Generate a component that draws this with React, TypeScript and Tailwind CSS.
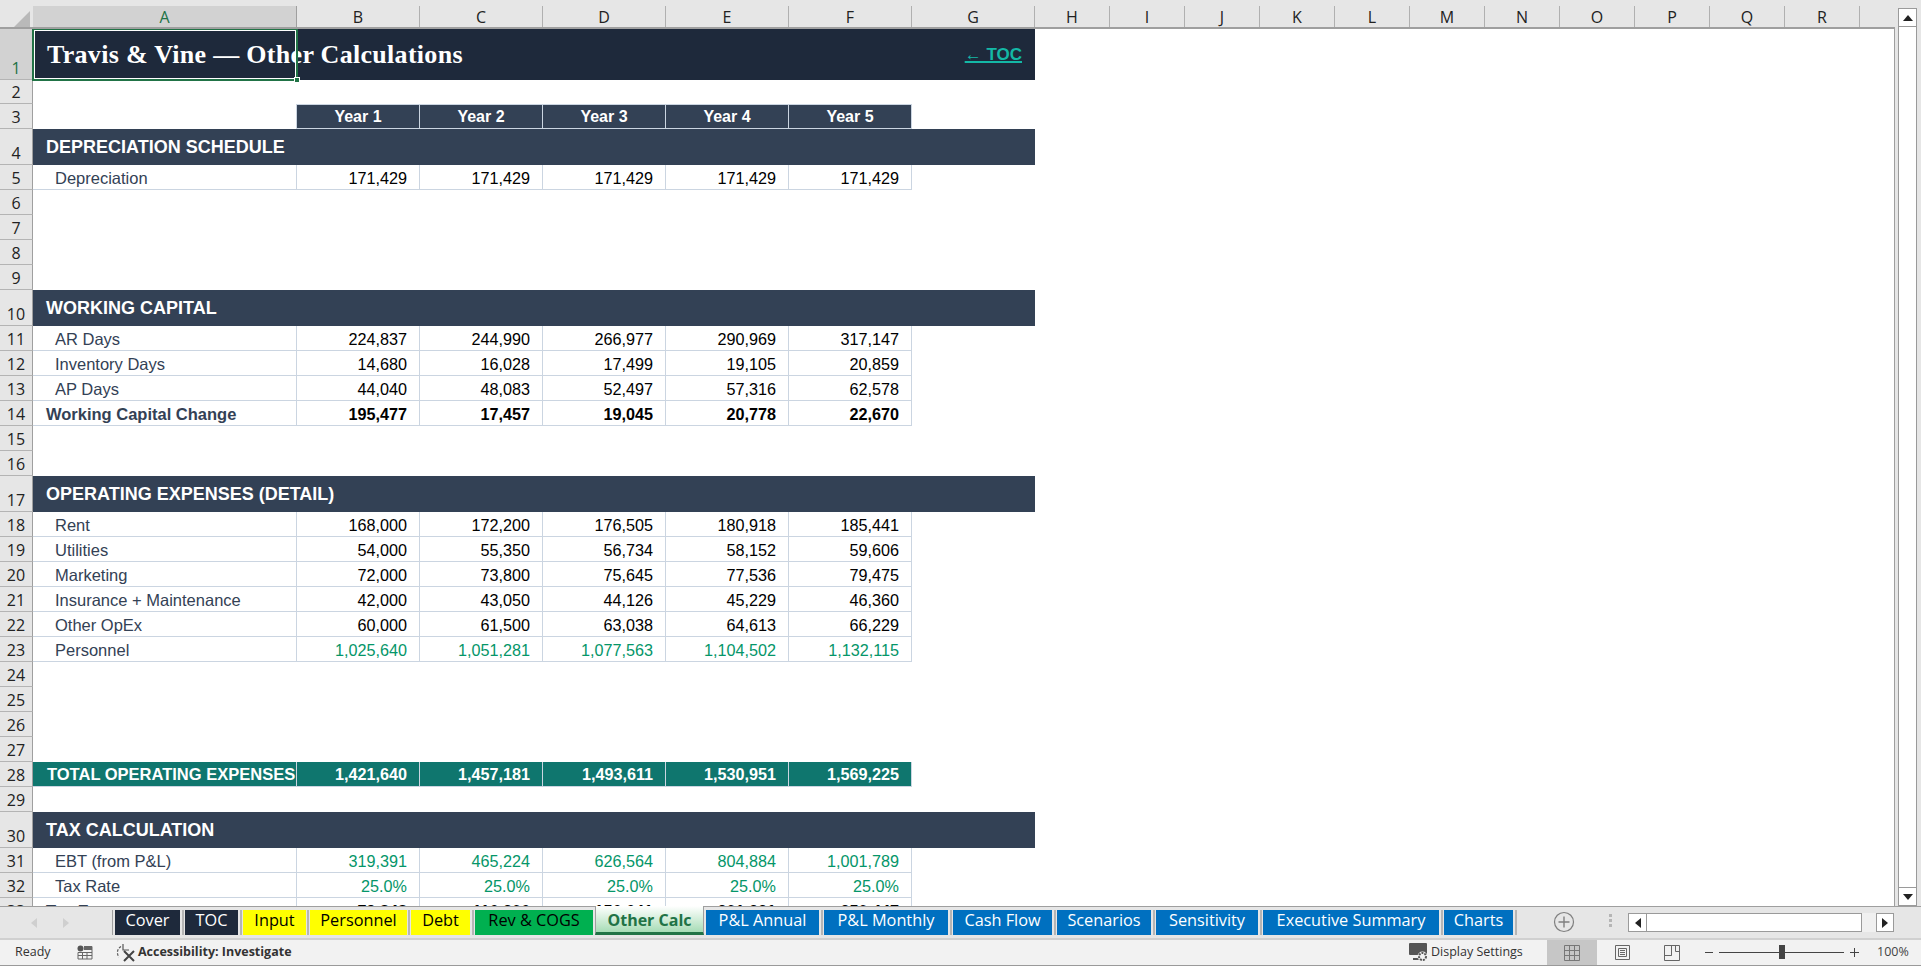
import { ReactNode } from "react";

const colHeads = [
  { l: "B", w: "w-[123px]" }, { l: "C", w: "w-[123px]" }, { l: "D", w: "w-[123px]" }, { l: "E", w: "w-[123px]" },
  { l: "F", w: "w-[123px]" }, { l: "G", w: "w-[123px]" }, { l: "H", w: "w-[75px]" }, { l: "I", w: "w-[75px]" },
  { l: "J", w: "w-[75px]" }, { l: "K", w: "w-[75px]" }, { l: "L", w: "w-[75px]" }, { l: "M", w: "w-[75px]" },
  { l: "N", w: "w-[75px]" }, { l: "O", w: "w-[75px]" }, { l: "P", w: "w-[75px]" }, { l: "Q", w: "w-[75px]" },
  { l: "R", w: "w-[75px]" },
];

const tabs = [
  { name: "Cover", cls: "w-[65px] bg-[#1e293b] text-white", gap: "w-[5px]" },
  { name: "TOC", cls: "w-[53px] bg-[#1e293b] text-white", gap: "w-[5px]" },
  { name: "Input", cls: "w-[63px] bg-[#ffff00] text-black", gap: "w-[4px]" },
  { name: "Personnel", cls: "w-[97px] bg-[#ffff00] text-black", gap: "w-[4px]" },
  { name: "Debt", cls: "w-[59px] bg-[#ffff00] text-black", gap: "w-[5px]" },
  { name: "Rev & COGS", cls: "w-[118px] bg-[#00b050] text-black", gap: "" },
  { name: "P&L Annual", cls: "w-[113px] bg-[#0070c0] text-white", gap: "w-[5px]" },
  { name: "P&L Monthly", cls: "w-[124px] bg-[#0070c0] text-white", gap: "w-[5px]" },
  { name: "Cash Flow", cls: "w-[99px] bg-[#0070c0] text-white", gap: "w-[5px]" },
  { name: "Scenarios", cls: "w-[94px] bg-[#0070c0] text-white", gap: "w-[5px]" },
  { name: "Sensitivity", cls: "w-[102px] bg-[#0070c0] text-white", gap: "w-[5px]" },
  { name: "Executive Summary", cls: "w-[176px] bg-[#0070c0] text-white", gap: "w-[5px]" },
  { name: "Charts", cls: "w-[69px] bg-[#0070c0] text-white", gap: "w-[5px]" },
];

function RowHead({ n, selected, h }: { n: number; selected?: boolean; h: string }) {
  return (
    <div
      className={`${h} w-[33px] shrink-0 flex items-end justify-center border-r border-b border-r-[#9f9f9f] border-b-[#b4b4b4] text-[16px] leading-[22px] font-['Open_Sans',sans-serif] ${
        selected ? "bg-[#d2d2d2] text-[#217346]" : "bg-[#e6e6e6] text-[#222]"
      }`}
    >
      {n}
    </div>
  );
}

function Blank({ n, h = "h-[25px]" }: { n: number; h?: string }) {
  return (
    <div className="flex">
      <RowHead n={n} h={h} />
    </div>
  );
}

function Section({ n, title }: { n: number; title: string }) {
  return (
    <div className="flex">
      <RowHead n={n} h="h-[36px]" />
      <div className="h-[36px] w-[1002px] bg-[#334155] flex items-center pl-[13px] text-white font-bold text-[18px]">
        {title}
      </div>
    </div>
  );
}

function DataRow({
  n,
  label,
  vals,
  tone = "plain",
}: {
  n: number;
  label: string;
  vals: string[];
  tone?: "plain" | "green" | "bold";
}) {
  const valCls =
    tone === "green" ? "text-[#059669]" : tone === "bold" ? "text-black font-bold" : "text-black";
  return (
    <div className="flex">
      <RowHead n={n} h="h-[25px]" />
      <div
        className={`h-[25px] w-[264px] border-r border-b border-[#cbd5e1] flex items-center pt-[2px] text-[16.5px] text-[#334155] ${
          tone === "bold" ? "font-bold pl-[13px]" : "pl-[22px]"
        }`}
      >
        {label}
      </div>
      {vals.map((v, i) => (
        <div
          key={i}
          className={`h-[25px] w-[123px] border-r border-b border-[#cbd5e1] flex items-center justify-end pt-[2px] pr-[12px] text-[16.2px] ${valCls}`}
        >
          {v}
        </div>
      ))}
    </div>
  );
}

function Triangle({ dir, cls }: { dir: "l" | "r" | "u" | "d"; cls: string }) {
  const pts = { l: "7,1 7,11 1,6", r: "1,1 1,11 7,6", u: "0,7 10,7 5,1", d: "0,1 10,1 5,7" }[dir];
  return (
    <svg width={dir === "u" || dir === "d" ? 10 : 8} height={dir === "u" || dir === "d" ? 8 : 12} className={cls}>
      <polygon points={pts} fill="currentColor" />
    </svg>
  );
}

function Btn({ children, cls }: { children: ReactNode; cls: string }) {
  return <div className={`bg-white border border-[#9a9a9a] flex items-center justify-center shrink-0 ${cls}`}>{children}</div>;
}

export default function App() {
  return (
    <div className="h-[966px] w-[1921px] overflow-hidden flex flex-col bg-[#e6e6e6] font-['Liberation_Sans',Arial,sans-serif]">
      {/* sheet + vertical scrollbar */}
      <div className="h-[906px] flex">
        <div className="w-[1895px] flex flex-col">
          {/* column letters */}
          <div className="h-[29px] pt-[6px] flex border-b-2 border-[#9f9f9f] font-['Open_Sans',sans-serif] text-[16px] text-[#222]">
            <div className="w-[33px] h-[22px] flex items-end justify-end pr-[3px] pb-[1px]">
              <svg width="16" height="16">
                <polygon points="16,0 16,16 0,16" fill="#b9b9b9" />
              </svg>
            </div>
            <div className="w-[264px] bg-[#d2d2d2] border-r border-[#9f9f9f] text-center text-[#217346] leading-[22px]">A</div>
            {colHeads.map((c) => (
              <div key={c.l} className={`${c.w} border-r border-[#b0b0b0] text-center leading-[22px]`}>
                {c.l}
              </div>
            ))}
          </div>

          {/* rows */}
          <div className="flex-1 overflow-hidden bg-white border-r border-[#9f9f9f]">
            <div className="flex relative">
              <RowHead n={1} selected h="h-[51px]" />
              <div className="h-[51px] w-[1002px] bg-[#1e293b] flex items-center justify-between pl-[14px] pr-[13px]">
                <span className="pb-[1px] font-['Liberation_Serif',serif] font-bold text-white text-[26px] tracking-[0.3px]">
                  Travis &amp; Vine — Other Calculations
                </span>
                <span className="text-[#14b8a6] underline decoration-2 font-bold text-[17px]">← TOC</span>
              </div>
              <div className="absolute left-[32px] top-[-1px] w-[266px] h-[53px] border-2 border-[#217346] shadow-[inset_0_0_0_1px_#ffffff]">
                <div className="absolute right-[-4px] bottom-[-4px] w-[6px] h-[6px] bg-[#217346] border border-white" />
              </div>
            </div>
            <Blank n={2} h="h-[24px]" />
            <div className="flex">
              <RowHead n={3} h="h-[25px]" />
              <div className="w-[263px] shrink-0" />
              {["Year 1", "Year 2", "Year 3", "Year 4", "Year 5"].map((y, i) => (
                <div
                  key={y}
                  className={`h-[25px] ${i === 0 ? "w-[124px] border-l" : "w-[123px]"} bg-[#334155] border-t border-r border-b border-[#cbd5e1] flex items-center justify-center pt-[1px] text-white font-bold text-[16px]`}
                >
                  {y}
                </div>
              ))}
            </div>
            <Section n={4} title="DEPRECIATION SCHEDULE" />
            <DataRow n={5} label="Depreciation" vals={["171,429", "171,429", "171,429", "171,429", "171,429"]} />
            <Blank n={6} />
            <Blank n={7} />
            <Blank n={8} />
            <Blank n={9} />
            <Section n={10} title="WORKING CAPITAL" />
            <DataRow n={11} label="AR Days" vals={["224,837", "244,990", "266,977", "290,969", "317,147"]} />
            <DataRow n={12} label="Inventory Days" vals={["14,680", "16,028", "17,499", "19,105", "20,859"]} />
            <DataRow n={13} label="AP Days" vals={["44,040", "48,083", "52,497", "57,316", "62,578"]} />
            <DataRow n={14} label="Working Capital Change" tone="bold" vals={["195,477", "17,457", "19,045", "20,778", "22,670"]} />
            <Blank n={15} />
            <Blank n={16} />
            <Section n={17} title="OPERATING EXPENSES (DETAIL)" />
            <DataRow n={18} label="Rent" vals={["168,000", "172,200", "176,505", "180,918", "185,441"]} />
            <DataRow n={19} label="Utilities" vals={["54,000", "55,350", "56,734", "58,152", "59,606"]} />
            <DataRow n={20} label="Marketing" vals={["72,000", "73,800", "75,645", "77,536", "79,475"]} />
            <DataRow n={21} label="Insurance + Maintenance" vals={["42,000", "43,050", "44,126", "45,229", "46,360"]} />
            <DataRow n={22} label="Other OpEx" vals={["60,000", "61,500", "63,038", "64,613", "66,229"]} />
            <DataRow n={23} label="Personnel" tone="green" vals={["1,025,640", "1,051,281", "1,077,563", "1,104,502", "1,132,115"]} />
            <Blank n={24} />
            <Blank n={25} />
            <Blank n={26} />
            <Blank n={27} />
            <div className="flex">
              <RowHead n={28} h="h-[25px]" />
              <div className="h-[25px] w-[264px] bg-[#0f766e] border-r border-b border-[#cbd5e1] flex items-center pl-[14px] text-white font-bold text-[16.5px] whitespace-nowrap overflow-hidden">
                TOTAL OPERATING EXPENSES
              </div>
              {["1,421,640", "1,457,181", "1,493,611", "1,530,951", "1,569,225"].map((v) => (
                <div
                  key={v}
                  className="h-[25px] w-[123px] bg-[#0f766e] border-r border-b border-[#cbd5e1] flex items-center justify-end pr-[12px] text-white font-bold text-[16.2px]"
                >
                  {v}
                </div>
              ))}
            </div>
            <Blank n={29} />
            <Section n={30} title="TAX CALCULATION" />
            <DataRow n={31} label="EBT (from P&L)" tone="green" vals={["319,391", "465,224", "626,564", "804,884", "1,001,789"]} />
            <DataRow n={32} label="Tax Rate" tone="green" vals={["25.0%", "25.0%", "25.0%", "25.0%", "25.0%"]} />
            <DataRow n={33} label="Tax Expense" tone="bold" vals={["79,848", "116,306", "156,641", "201,221", "250,447"]} />
          </div>
        </div>

        {/* vertical scrollbar */}
        <div className="pl-[3px] pt-[8px] w-[26px] flex flex-col">
          <Btn cls="w-[19px] h-[19px]">
            <Triangle dir="u" cls="text-[#222]" />
          </Btn>
          <div className="flex-1 w-[19px] bg-white border-x border-[#9a9a9a]" />
          <Btn cls="w-[19px] h-[19px]">
            <Triangle dir="d" cls="text-[#222]" />
          </Btn>
        </div>
      </div>

      {/* sheet tabs */}
      <div className="h-[32px] shrink-0 flex items-start pt-[3px] bg-[#e6e6e6] border-t border-[#9f9f9f] font-['Open_Sans',sans-serif] text-[16.3px] leading-[20px]">
        <div className="w-[112px] h-[25px] flex items-center shrink-0 pl-[30px] gap-[24px]">
          <Triangle dir="l" cls="text-[#cfcfcf]" />
          <Triangle dir="r" cls="text-[#cfcfcf]" />
        </div>
        <div className="w-[3px] h-[25px] flex shrink-0">
          <div className="w-[1px] bg-[#9f9f9f]" />
        </div>
        {tabs.map((t) => (
          <div key={t.name} className="flex shrink-0">
            <div className={`${t.cls} h-[25px] text-center whitespace-nowrap`}>{t.name}</div>
            {t.gap ? (
              <div className={`${t.gap} h-[25px] flex justify-center`}>
                <div className="w-[2px] bg-[#b5b5b5]" />
              </div>
            ) : (
              <div className="w-[2px]" />
            )}
            {t.name === "Rev & COGS" && (
              <>
                <div className="mt-[-4px] pt-[4px] w-[109px] h-[29px] border-x border-[#9f9f9f] border-b-[3px] border-b-[#217346] bg-gradient-to-b from-white to-[#a6dcb6] text-center font-bold text-[#217346] text-[16px]">
                  Other Calc
                </div>
                <div className="w-[2px]" />
              </>
            )}
          </div>
        ))}
        <div className="ml-[35px] mt-[1px] shrink-0">
          <svg width="22" height="22" viewBox="0 0 22 22" fill="none" stroke="#7f7f7f">
            <circle cx="11" cy="11" r="9.5" strokeWidth="1.2" />
            <path d="M11 5.5v11M5.5 11h11" strokeWidth="1.4" />
          </svg>
        </div>
        <div className="ml-[34px] mt-[4px] shrink-0 flex flex-col gap-[2px]">
          <div className="w-[3px] h-[3px] bg-[#b5b5b5]" />
          <div className="w-[3px] h-[3px] bg-[#b5b5b5]" />
          <div className="w-[3px] h-[3px] bg-[#b5b5b5]" />
        </div>
        <div className="ml-[16px] mt-[3px] flex shrink-0">
          <Btn cls="w-[19px] h-[19px]">
            <Triangle dir="l" cls="text-[#222]" />
          </Btn>
          <div className="w-[215px] h-[19px] bg-white border-y border-r border-[#9a9a9a]" />
          <div className="w-[14px] h-[19px] bg-[#f0f0f0]" />
          <Btn cls="w-[18px] h-[19px]">
            <Triangle dir="r" cls="text-[#222]" />
          </Btn>
        </div>
      </div>

      {/* status bar */}
      <div className="h-[28px] shrink-0 flex items-center bg-[#f2f2f2] border-t-2 border-b border-t-[#d0d0d0] border-b-[#9a9a9a] font-['Open_Sans',sans-serif] text-[12.5px] text-[#333]">
        <span className="ml-[15px] w-[62px]">Ready</span>
        <svg width="16" height="15" viewBox="0 0 16 15" className="shrink-0">
          <circle cx="3.5" cy="3.5" r="3" fill="#555" />
          <path d="M7 1.5h8V14H1V7.5h14M1 10.5h14M5.5 7.5V14M10 7.5V14" fill="none" stroke="#666" />
          <rect x="7" y="1" width="8" height="4" fill="#666" />
        </svg>
        <svg width="20" height="19" viewBox="0 0 20 19" fill="none" stroke="#555" className="ml-[23px] shrink-0">
          <path d="M5 3.5A7 7 0 0 0 3 14" strokeWidth="1.2" strokeDasharray="2.5 1.5" />
          <path d="M7 1v6h6" strokeWidth="1.2" />
          <path d="M8 8l10 10M18 8L8 18" strokeWidth="2" stroke="#444" />
        </svg>
        <span className="ml-[2px] font-bold w-[1271px] whitespace-nowrap">Accessibility: Investigate</span>
        <svg width="20" height="20" viewBox="0 0 20 20" className="shrink-0">
          <rect x="0" y="0" width="18" height="12" rx="1" fill="#555" />
          <rect x="4" y="15" width="8" height="2" fill="#555" />
          <circle cx="13.5" cy="13.5" r="5" fill="#f2f2f2" />
          <circle cx="13.5" cy="13.5" r="3.5" fill="none" stroke="#555" strokeWidth="2" strokeDasharray="2 1" />
        </svg>
        <span className="ml-[2px] w-[116px] whitespace-nowrap">Display Settings</span>
        <div className="w-[50px] h-[25px] bg-[#c6c6c6] flex items-center justify-center shrink-0">
          <svg width="16" height="16" viewBox="0 0 16 16" fill="none" stroke="#777">
            <path d="M.5.5h15v15H.5zM5.5.5v15M10.5.5v15M.5 5.5h15M.5 10.5h15" />
          </svg>
        </div>
        <div className="w-[50px] flex justify-center shrink-0">
          <svg width="15" height="15" viewBox="0 0 15 15" fill="none" stroke="#666">
            <path d="M.5.5h14v14H.5zM3.5 3.5h8v8h-8zM5 5.5h5M5 7.5h5M5 9.5h5" />
          </svg>
        </div>
        <div className="w-[50px] flex justify-center shrink-0">
          <svg width="16" height="16" viewBox="0 0 16 16" fill="none" stroke="#666">
            <path d="M.5.5h15v15H.5zM.5 10.5h7v-10M7.5 10.5V.5M11.5.5v6h4" />
          </svg>
        </div>
        <div className="ml-[8px] w-[8px] h-[1px] bg-[#444] shrink-0" />
        <div className="ml-[6px] w-[125px] h-[1px] bg-[#444] shrink-0 relative">
          <div className="absolute left-[60px] top-[-7px] w-[6px] h-[14px] bg-[#444]" />
        </div>
        <svg width="9" height="9" viewBox="0 0 9 9" className="ml-[6px] shrink-0" stroke="#444">
          <path d="M4.5 0v9M0 4.5h9" />
        </svg>
        <span className="ml-[18px] text-[#444]">100%</span>
      </div>
    </div>
  );
}
